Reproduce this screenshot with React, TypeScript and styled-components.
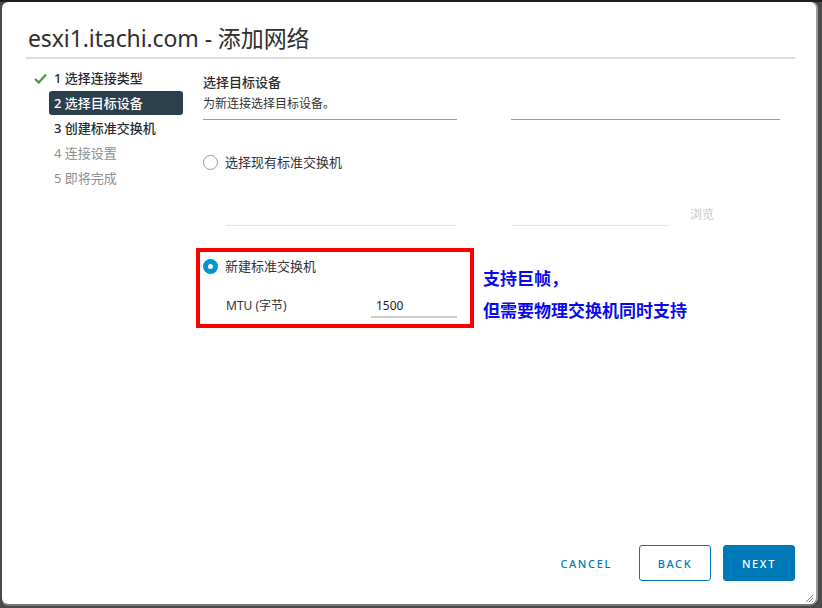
import React from "react";
import styled, { createGlobalStyle } from "styled-components";

const GlobalStyle = createGlobalStyle`
  html, body { margin: 0; padding: 0; background: #3a3a3a; }
  body { font-family: "Noto Sans", "Noto Sans CJK SC", sans-serif; color: #333; }
  * { box-sizing: border-box; }
`;

const Page = styled.div`
  width: 822px;
  height: 608px;
  padding: 2px 0 0 2px;
  background: linear-gradient(#1e1e1e 0 2px, #4a4a4a 2px);
`;

const Dialog = styled.div`
  position: relative;
  width: 814px;
  height: 602px;
  background: #fff;
  border-radius: 6px;
  box-shadow: 2px 0 0 #9a9a9a, 0 2px 0 #777;
  display: flex;
  flex-direction: column;
  padding: 22px 21px 23px 24px;
`;

const Title = styled.h1`
  margin: 0 0 0 2px;
  font-size: 23px;
  line-height: 29px;
  font-weight: 400;
  color: #2f2f2f;
  letter-spacing: -0.1px;
`;

const Rule = styled.div`
  margin-top: 4px;
  height: 2px;
  background: #dcdcdc;
`;

const Body = styled.div`
  flex: 1;
  display: flex;
  padding-top: 7px;
`;

const Nav = styled.div`
  display: flex;
  flex-direction: column;
  gap: 1px;
  width: 157px;
`;

const NavRow = styled.div`
  display: flex;
  align-items: center;
  height: 24px;
`;

const IconSlot = styled.div`
  width: 23px;
  display: flex;
  align-items: center;
  padding-left: 8px;
`;

const NavItem = styled.div<{ $state: "done" | "active" | "next" | "disabled" }>`
  width: 134px;
  height: 24px;
  line-height: 24px;
  padding-left: 5px;
  font-size: 13px;
  border-radius: 3px;
  font-weight: ${(p) => (p.$state === "disabled" ? 400 : 500)};
  background: ${(p) => (p.$state === "active" ? "#2b3f4d" : "transparent")};
  color: ${(p) =>
    p.$state === "active" ? "#fff" : p.$state === "disabled" ? "#8e8e8e" : "#2a2a2a"};
`;

const Content = styled.div`
  margin-left: 20px;
  flex: 1;
  display: flex;
  flex-direction: column;
`;

const Heading = styled.div`
  margin-top: 7px;
  font-size: 13px;
  line-height: 18px;
  font-weight: 500;
  color: #2a2a2a;
`;

const Desc = styled.div`
  margin-top: 4px;
  font-size: 12px;
  line-height: 18px;
  color: #333;
`;

const FieldRow = styled.div<{ $indent?: number; $top: number }>`
  display: flex;
  align-items: flex-start;
  margin-top: ${(p) => p.$top}px;
  padding-left: ${(p) => p.$indent ?? 0}px;
`;

const Field = styled.div<{ $w: number; $gap?: number; $light?: boolean; $h: number }>`
  width: ${(p) => p.$w}px;
  height: ${(p) => p.$h}px;
  margin-left: ${(p) => p.$gap ?? 0}px;
  border-bottom: 1px solid ${(p) => (p.$light ? "#e6e6e6" : "#9a9a9a")};
`;

const Browse = styled.div`
  margin-left: 21px;
  font-size: 12px;
  line-height: 18px;
  color: #c8c8c8;
`;

const OptionRow = styled.div<{ $top: number }>`
  display: flex;
  align-items: center;
  gap: 7px;
  margin-top: ${(p) => p.$top}px;
  height: 18px;
`;

const Radio = styled.span<{ $checked?: boolean }>`
  width: 15px;
  height: 15px;
  border-radius: 50%;
  flex: none;
  display: flex;
  align-items: center;
  justify-content: center;
  border: ${(p) => (p.$checked ? "none" : "1px solid #9a9a9a")};
  background: ${(p) => (p.$checked ? "#0095d3" : "#fff")};
  &::after {
    content: "";
    display: ${(p) => (p.$checked ? "block" : "none")};
    width: 5px;
    height: 5px;
    border-radius: 50%;
    background: #fff;
  }
`;

const OptionLabel = styled.span`
  font-size: 13px;
  line-height: 18px;
  color: #333;
`;

const NoteRow = styled.div`
  display: flex;
  align-items: flex-start;
  margin-top: 22px;
  margin-left: -7px;
`;

const RedBox = styled.div`
  width: 278px;
  height: 80px;
  border: 4px solid #ff0000;
  padding: 5px 13px 0 3px;
  display: flex;
  flex-direction: column;
`;

const MtuRow = styled.div`
  display: flex;
  align-items: flex-start;
  margin-top: 22px;
  padding-left: 23px;
`;

const MtuLabel = styled.div`
  width: 145px;
  font-size: 12px;
  line-height: 18px;
  color: #333;
`;

const MtuInput = styled.div`
  width: 86px;
  height: 21px;
  padding-left: 5px;
  font-size: 12px;
  line-height: 18px;
  color: #222;
  border-bottom: 2px solid #cfcfcf;
`;

const Annotation = styled.div`
  margin-left: 9px;
  margin-top: 15px;
  font-size: 17px;
  line-height: 32px;
  font-weight: 700;
  color: #0a0aee;
`;

const Footer = styled.div`
  display: flex;
  justify-content: flex-end;
  align-items: center;
  gap: 12px;
`;

const Button = styled.button<{ $variant: "flat" | "outline" | "primary" }>`
  height: 36px;
  min-width: 72px;
  padding: 0 12px;
  border-radius: 3px;
  font-family: "Noto Sans", sans-serif;
  font-size: 11px;
  font-weight: 500;
  letter-spacing: 0.15em;
  text-transform: uppercase;
  cursor: pointer;
  border: 1px solid ${(p) => (p.$variant === "flat" ? "transparent" : "#0079b8")};
  background: ${(p) => (p.$variant === "primary" ? "#0079b8" : "#fff")};
  color: ${(p) => (p.$variant === "primary" ? "#fff" : "#0079b8")};
  margin-right: ${(p) => (p.$variant === "flat" ? "2px" : "0")};
`;

const Grip = styled.svg`
  position: absolute;
  right: 3px;
  bottom: 2px;
`;

const steps: { label: string; state: "done" | "active" | "next" | "disabled" }[] = [
  { label: "1 选择连接类型", state: "done" },
  { label: "2 选择目标设备", state: "active" },
  { label: "3 创建标准交换机", state: "next" },
  { label: "4 连接设置", state: "disabled" },
  { label: "5 即将完成", state: "disabled" },
];

export default function App() {
  return (
    <>
      <GlobalStyle />
      <Page>
        <Dialog>
          <Title>esxi1.itachi.com - 添加网络</Title>
          <Rule />
          <Body>
            <Nav>
              {steps.map((s) => (
                <NavRow key={s.label}>
                  <IconSlot>
                    {s.state === "done" && (
                      <svg width="13" height="11" viewBox="0 0 13 11">
                        <path d="M1 6 L4.8 9.5 L12 1.5" fill="none" stroke="#3f9c35" strokeWidth="2.2" />
                      </svg>
                    )}
                  </IconSlot>
                  <NavItem $state={s.state}>{s.label}</NavItem>
                </NavRow>
              ))}
            </Nav>
            <Content>
              <Heading>选择目标设备</Heading>
              <Desc>为新连接选择目标设备。</Desc>
              <FieldRow $top={0}>
                <Field $w={254} $h={7} />
                <Field $w={269} $h={7} $gap={54} />
              </FieldRow>
              <OptionRow $top={33}>
                <Radio />
                <OptionLabel>选择现有标准交换机</OptionLabel>
              </OptionRow>
              <FieldRow $top={35} $indent={23}>
                <Field $w={231} $h={20} $light />
                <Field $w={158} $h={20} $gap={54} $light />
                <Browse>浏览</Browse>
              </FieldRow>
              <NoteRow>
                <RedBox>
                  <OptionRow $top={0}>
                    <Radio $checked />
                    <OptionLabel>新建标准交换机</OptionLabel>
                  </OptionRow>
                  <MtuRow>
                    <MtuLabel>MTU (字节)</MtuLabel>
                    <MtuInput>1500</MtuInput>
                  </MtuRow>
                </RedBox>
                <Annotation>
                  <div>支持巨帧，</div>
                  <div>但需要物理交换机同时支持</div>
                </Annotation>
              </NoteRow>
            </Content>
          </Body>
          <Footer>
            <Button $variant="flat">Cancel</Button>
            <Button $variant="outline">Back</Button>
            <Button $variant="primary">Next</Button>
          </Footer>
          <Grip width="7" height="7" viewBox="0 0 7 7">
            <path d="M0 7 L7 0 M3 7 L7 3 M6 7 L7 6" stroke="#888" strokeWidth="1" />
          </Grip>
        </Dialog>
      </Page>
    </>
  );
}
